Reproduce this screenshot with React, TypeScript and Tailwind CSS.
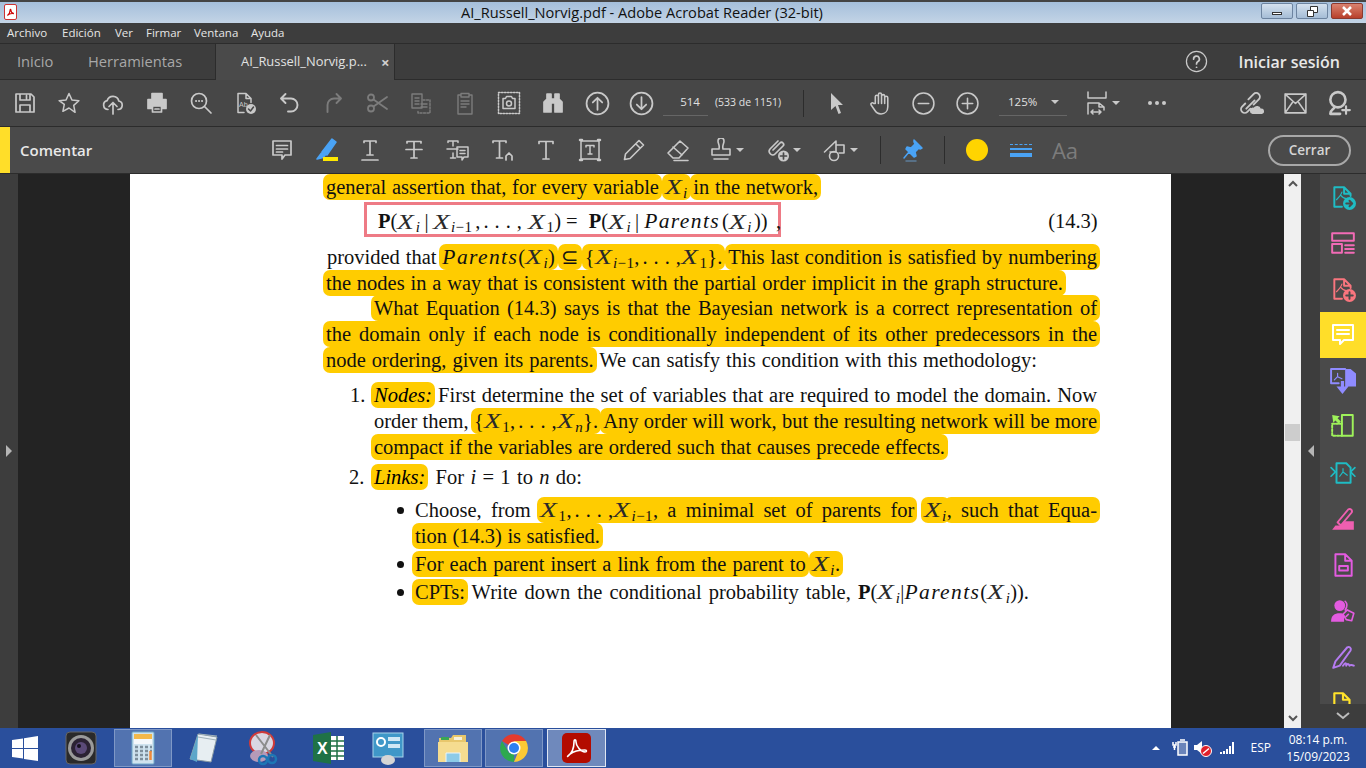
import type { ReactNode } from "react";

const ui = "font-['Open_Sans',sans-serif]";

function Ic({ children, c = "#c9c9c9", s = 24, sw = 1.7 }: { children: ReactNode; c?: string; s?: number; sw?: number }) {
  return (
    <svg width={s} height={s} viewBox="0 0 24 24" fill="none" stroke={c} strokeWidth={sw} strokeLinecap="round" strokeLinejoin="round" className="shrink-0">
      {children}
    </svg>
  );
}

function Cell({ children, w = "w-[44px]" }: { children: ReactNode; w?: string }) {
  return <div className={`${w} h-full flex items-center justify-center shrink-0`}>{children}</div>;
}

function Caret() {
  return <div className="w-0 h-0 border-x-[4px] border-x-transparent border-t-[4px] border-t-[#c9c9c9] ml-[3px]" />;
}

const gray = "#7c7c7c";

const topIcons: ReactNode[] = [
  <Ic><path d="M3 3h15l3 3v15H3zM7 3v6h10V3M13.5 4.500v3M7 21v-7h10v7" /></Ic>,
  <Ic sw={1.5}><path d="M12 2.500l2.900 6.400 7 .8-5.200 4.700 1.400 6.900L12 17l-6.100 3.300 1.400-6.900L2.100 9.700l7-.8z" /></Ic>,
  <Ic><path d="M7 18.500a4.500 4.500 0 0 1-.8-8.900 6 6 0 0 1 11.600.4 4.300 4.300 0 0 1-.8 8.500M12 23V11.500M8 15.500l4-4 4 4" /></Ic>,
  <Ic c="#c9c9c9"><path fill="#c9c9c9" d="M7 2.500h10v5H7zM3 8.500h18v9h-3.500v-3h-11v3H3z" /><path d="M7.500 15h9v6h-9zM10 18h4" /></Ic>,
  <Ic><circle cx="10" cy="10" r="7.500" /><path d="M15.500 15.500L22 22" /><path d="M7 10h.1M10 10h.1M13 10h.1" strokeWidth="2" /></Ic>,
  <Ic sw={1.5}><path d="M5 2.500h8l5 5v4M13 2.500v5h5M11 21.500H5v-19" /><text x="6" y="16" fontSize="7" fill="#c9c9c9" stroke="none" fontFamily="Liberation Sans">Ab</text><circle cx="18" cy="18" r="5" fill="#c9c9c9" stroke="none" /><path d="M15.500 18l2 2 3-4" stroke="#474747" /></Ic>,
  <Ic sw={1.9}><path d="M8.500 3L4 7.500 8.500 12M4 7.500h10a6.500 6.500 0 0 1 0 13h-3" /></Ic>,
  <Ic c={gray} sw={1.9}><path d="M15.500 3L20 7.500 15.500 12M20 7.500h-7a6.500 6.500 0 0 0-6.500 6.500v7" /></Ic>,
  <Ic c={gray} sw={1.8}><circle cx="6" cy="6.500" r="3" /><circle cx="6" cy="17.500" r="3" /><path d="M8.500 8.500L22 18M8.500 15.500L22 6" /></Ic>,
  <Ic c={gray} sw={1.4}><path d="M3 3h10v14H3zM6 7h4M6 10h4M6 13h4" /><path d="M14 9h7v13H9v-3" strokeDasharray="2 1.500" /><path d="M12 13h6M12 16h6" /></Ic>,
  <Ic c={gray} sw={1.4}><path d="M8 4H5v19h14V4h-3M8 2.500h8V6H8zM8 10h8M8 13h8M8 16h5" /></Ic>,
  <Ic sw={1.5}><path d="M1.500 1.500h21v21h-21z" strokeDasharray="1.500 1.500" /><path d="M6 7.500h2.500l1-2h5l1 2H18v10H6z" /><circle cx="12" cy="12.500" r="2.500" /></Ic>,
  <Ic c="#c9c9c9"><path fill="#c9c9c9" d="M6 3h4v5h4V3h4v5l3 3v10h-7v-9h-4v9H3V11l3-3z" /></Ic>,
  <Ic s={25}><circle cx="12" cy="12" r="10.500" /><path d="M12 18V6.500M7.500 11L12 6.500l4.500 4.500" /></Ic>,
  <Ic s={25}><circle cx="12" cy="12" r="10.500" /><path d="M12 6v11.500M7.500 13l4.500 4.500 4.500-4.500" /></Ic>,
];

const T = "M5 5.500V4h12v1.500M11 4v14M8 18h6";

const commentIcons: ReactNode[] = [
  <Ic><path d="M3 3h18v14h-6l-3 4v-4H3zM6.500 7.500h11M6.500 11h11M6.500 14h6" /></Ic>,
  <Ic s={24} c="#4aa3f5" sw={1.5}><path fill="#4aa3f5" d="M18 1l4 3-9 13-5-3zM7.500 15l3.500 2.500-2 2L3 21z" /><rect x="9" y="19" width="15" height="4" fill="#ffe800" stroke="none" /></Ic>,
  <Ic><path d={T} transform="translate(1 -1)" /><path d="M4 22h16" /></Ic>,
  <Ic><path d="M5 5V3.500h14V5M12 3.500V20M9 20h6M4 11.500h16" /></Ic>,
  <Ic sw={1.5}><path d="M2 4.500V3h10v1.500M7 3v5M7 15v5M4.500 20h5M1 11h11" /><path d="M11 9h11v10h-4l-2 3v-3h-5zM14 12.500h5M14 15.500h5" /></Ic>,
  <Ic><path d="M3 4.500V3h13v1.500M9.500 3v17M6.500 20h6M16 22v-4l3-3 3 3v4" /></Ic>,
  <Ic><path d="M5 5.500V3.500h14v2M12 3.500V21M9 21h6" /></Ic>,
  <Ic sw={1.5}><path d="M3 3h18v18H3zM8 9V7.500h8V9M12 7.500V16M10 16h4" /><path d="M2 2h2M20 2h2M2 22h2M20 22h2" strokeWidth="2.500" /></Ic>,
  <Ic sw={1.6}><path d="M17 2.500l4.500 4.500L8 20.500 2.500 21.500 3.500 16zM14 6l4 4" /></Ic>,
  <Ic sw={1.6}><path d="M14 3l8 7-9 10H7l-5-5zM7 9l9 8M8 22.500h14" /></Ic>,
];

function Doc({ c, children }: { c: string; children?: ReactNode }) {
  return (
    <>
      <path d="M11 21H4V3h9l6 6v2M13 3v6h6" stroke={c} />
      <path d="M11 7.500c-1 3-3 5-5 7M10 10.500c1.500 2 3 3 5 3" stroke={c} strokeWidth="1.100" />
      {children}
    </>
  );
}

const rightIcons: ReactNode[] = [
  <Ic c="#1fbcc4" s={26} sw={1.8}><Doc c="#1fbcc4"><circle cx="18" cy="18" r="6" fill="#1fbcc4" stroke="none" /><path d="M15 18h5M18 15.500l2.500 2.500-2.500 2.500" stroke="#4a4a4a" /></Doc></Ic>,
  <Ic c="#f26bb6" s={26} sw={1.8}><path d="M2 3h20v7H2zM2 13h9v8H2zM14 14h8M14 17.500h8M14 21h8" /></Ic>,
  <Ic c="#f9757e" s={26} sw={1.8}><Doc c="#f9757e"><circle cx="18" cy="18" r="6" fill="#f9757e" stroke="none" /><path d="M15 18h6M18 15v6" stroke="#4a4a4a" /></Doc></Ic>,
  <Ic c="#ffffff" s={24} sw={2}><path d="M2 2h20v15h-9l-4 4v-4H2zM6 7h12M6 11h12" /></Ic>,
  <Ic c="#8f8bff" s={26} sw={1.8}><path d="M8 14H1V1h13" /><path d="M7 5v3L4 11M7 8l4 2" strokeWidth="1.100" /><path fill="#8f8bff" stroke="none" d="M14 1h5l5 4v12H14zM10 12h3v5h4l-5.500 7L6 17h4z" /></Ic>,
  <Ic c="#9ef25a" s={26} sw={1.8}><path d="M11 1h10v19H11z" /><path d="M11 9H2v11h9" strokeDasharray="2 1.500" /><path fill="#9ef25a" stroke="none" d="M2 1l7 1-2 2 3 3-2 2-3-3-2 2z" /></Ic>,
  <Ic c="#1fbcc4" s={26} sw={1.8}><path d="M6 3h9l4 4v14H6zM6 3v4M19 7v3" /><path d="M12 8v3L9 15M12 11l4 3" strokeWidth="1.100" /><path d="M1 7l4 4-4 4M23 7l-4 4 4 4" strokeWidth="1.500" /></Ic>,
  <Ic c="#ef5fb0" s={26} sw={1.8}><path d="M7 15L17 3c2-1 4 1 3 3L10 18z" /><path fill="#ef5fb0" stroke="none" d="M2 22l3-4h5l4-4h8v8z" /></Ic>,
  <Ic c="#e35be0" s={26} sw={1.8}><path d="M5 2h9l6 6v14H5zM14 2v6h6M8.500 13h8v4h-8z" /></Ic>,
  <Ic c="#e35be0" s={26} sw={1.5}><circle cx="9" cy="7" r="5" fill="#e35be0" stroke="none" /><path fill="#e35be0" stroke="none" d="M1 22c0-6 3-8 8-8 2 0 3 .500 4 1v7z" /><path d="M14 3c2 2 2 5 0 8M16 11l6 3-2 7-5-1-3-5zM15 17l2-2" /></Ic>,
  <Ic c="#b57bf0" s={26} sw={1.8}><path d="M5 16L16 3c2-1 4 1 3 3L9 20l-6 2zM12 20c2-3 3-3 3 0 1-2 2-2 3 0 1-1 2-1 4 0" /></Ic>,
  <Ic c="#ffe22b" s={26} sw={2}><path d="M4 23V3h8l6 6v4M12 3v6h6M4 23h16v-4" /></Ic>,
];

function X({ sub }: { sub?: ReactNode }) {
  return (
    <span className="whitespace-nowrap">
      <i className="inline-block origin-left scale-x-[1.25] mr-[5px] text-[22px] text-[#2a2a2a]">X</i>
      {sub !== undefined && <sub className="text-[15px] not-italic tracking-[0.4px]">{sub}</sub>}
    </span>
  );
}

const I = () => <i>i</i>;
const Im1 = () => (
  <>
    <i>i</i>−1
  </>
);

const Dots = () => <span className="tracking-[6px] ml-[3px]">...</span>;
const Parents = () => <i className="text-[21.500px] tracking-[1.400px]">Parents</i>;

function H({ children, className = "" }: { children: ReactNode; className?: string }) {
  return <span className={`bg-[#ffcc00] rounded-[7px] py-[2px] px-[3px] -mx-[3px] ${className}`}>{children}</span>;
}

function Line({ w, ml = "ml-[196px]", mt = "", children }: { w: string; ml?: string; mt?: string; children: ReactNode }) {
  return (
    <div className={`h-[26px] leading-[26px] shrink-0 text-justify [text-align-last:justify] whitespace-nowrap ${w} ${ml} ${mt}`}>
      {children}
    </div>
  );
}

function Bullet() {
  return <span className="w-[7px] h-[7px] rounded-full bg-[#111] shrink-0 mt-[10px]" />;
}

function Page() {
  return (
    <div className="w-[1041px] h-full shrink-0 bg-white flex flex-col font-['Liberation_Serif',serif] text-[20.500px] text-[#111] overflow-hidden">
      <Line w="w-[492px]">
        <H>general assertion that, for every variable</H> <H><X sub={<I />} /></H> <H>in the network,</H>
      </Line>
      <div className="flex items-center h-[35px] mt-[2px] ml-[234px] shrink-0">
        <div className="w-[417px] h-[35px] border-[3px] border-[#ee7a85] flex items-center pl-[11px] pt-[3px] whitespace-nowrap">
          <b>P</b>(<X sub={<I />} /><span className="pl-[4px] pr-[4px]">|</span><X sub={<Im1 />} /><span className="ml-[3px]">,</span><Dots />,<span className="w-[6px]" /><X sub="1" />)<span className="pl-[5px] pr-[11px]">=</span><b>P</b>(<X sub={<I />} /><span className="pl-[4px] pr-[5px]">|</span><Parents /><span className="ml-[2px]">(</span><X sub={<I />} /><span className="ml-[2px]">))</span>
        </div>
        <span className="ml-[-5px] pt-[3px]">,</span>
        <span className="ml-[267px] pt-[3px]">(14.3)</span>
      </div>
      <Line w="w-[770px]" ml="ml-[197px]" mt="mt-[7px]">
        provided that <H><Parents />(<X sub={<I />} />)</H> <H>⊆</H> <H>{"{"}<X sub={<Im1 />} />,<Dots />,<X sub="1" />{"}"}.</H> <H>This last condition is satisfied by numbering</H>
      </Line>
      <Line w="w-[737px]">
        <H>the nodes in a way that is consistent with the partial order implicit in the graph structure.</H>
      </Line>
      <Line w="w-[723px]" ml="ml-[244px]" mt="-mt-px">
        <H>What Equation (14.3) says is that the Bayesian network is a correct representation of</H>
      </Line>
      <Line w="w-[771px]">
        <H>the domain only if each node is conditionally independent of its other predecessors in the</H>
      </Line>
      <Line w="w-[711px]">
        <H>node ordering, given its parents.</H> We can satisfy this condition with this methodology:
      </Line>
      <div className="flex mt-[9px] shrink-0">
        <span className="ml-[220px] w-[24px] leading-[26px]">1.</span>
        <Line w="w-[723px]" ml="ml-0">
          <H><i className="text-black">Nodes:</i></H> First determine the set of variables that are required to model the domain. Now
        </Line>
      </div>
      <Line w="w-[723px]" ml="ml-[244px]">
        order them, <H>{"{"}<X sub="1" />,<Dots />,<X sub={<i>n</i>} />{"}"}.</H> <H>Any order will work, but the resulting network will be more</H>
      </Line>
      <Line w="w-[571px]" ml="ml-[244px]">
        <H>compact if the variables are ordered such that causes precede effects.</H>
      </Line>
      <div className="flex mt-[4px] shrink-0">
        <span className="ml-[219px] w-[25px] leading-[26px]">2.</span>
        <Line w="w-[208px]" ml="ml-0">
          <H><i className="text-black">Links:</i></H>{" "}<span className="ml-[4px]">For <i>i</i> = 1 to <i>n</i> do:</span>
        </Line>
      </div>
      <div className="flex mt-[7px] shrink-0">
        <span className="ml-[267px] w-[18px] flex"><Bullet /></span>
        <Line w="w-[682px]" ml="ml-0">
          Choose, from <H><X sub="1" />,<Dots />,<X sub={<Im1 />} />, a minimal set of parents for</H> <H><X sub={<I />} /></H><H>, such that Equa-</H>
        </Line>
      </div>
      <Line w="w-[185px]" ml="ml-[285px]">
        <H>tion (14.3) is satisfied.</H>
      </Line>
      <div className="flex mt-[2px] shrink-0">
        <span className="ml-[267px] w-[18px] flex"><Bullet /></span>
        <Line w="w-[425px]" ml="ml-0">
          <H>For each parent insert a link from the parent to</H> <H><X sub={<I />} />.</H>
        </Line>
      </div>
      <div className="flex mt-[2px] shrink-0">
        <span className="ml-[267px] w-[18px] flex"><Bullet /></span>
        <Line w="w-[614px]" ml="ml-0">
          <H>CPTs:</H> Write down the conditional probability table, <b>P</b>(<X sub={<I />} />|<Parents />(<X sub={<I />} />)).
        </Line>
      </div>
    </div>
  );
}

function Tri({ dir }: { dir: "left" | "right" }) {
  return dir === "left" ? (
    <div className="w-0 h-0 border-y-[6px] border-y-transparent border-r-[6px] border-r-[#b5b5b5]" />
  ) : (
    <div className="w-0 h-0 border-y-[6px] border-y-transparent border-l-[6px] border-l-[#b5b5b5]" />
  );
}

function TaskItem({ children, on, w = "w-[58px]", ml = "" }: { children: ReactNode; on?: "open" | "active"; w?: string; ml?: string }) {
  const look =
    on === "active"
      ? "bg-[#6f89bc] border-[#dfe6f2]"
      : on === "open"
        ? "bg-[#5273b0] border-[#7f98c6]"
        : "border-transparent";
  return <div className={`${w} ${ml} h-[38px] border flex items-center justify-center shrink-0 ${look}`}>{children}</div>;
}

function Taskbar() {
  return (
    <div className={`h-[40px] bg-[#2a4f9c] flex items-center shrink-0 ${ui}`}>
      <div className="w-[50px] flex justify-center">
        <svg width="28" height="27" viewBox="0 0 28 27"><path fill="#fff" d="M1 5l11-1.500v9.500H1zM13 3.300L27 1v12H13zM1 14h11v9.500L1 22zM13 14h14v12l-14-2z" /></svg>
      </div>
      <Cell w="w-[62px]">
        <svg width="32" height="34" viewBox="0 0 32 34">
          <rect x="1" y="1" width="30" height="32" rx="4" fill="#2a2a2a" stroke="#666" />
          <circle cx="16" cy="17" r="13" fill="#9a9a9a" />
          <circle cx="16" cy="17" r="10" fill="#2b2233" />
          <circle cx="16" cy="17" r="6" fill="#5b4a78" />
          <circle cx="14" cy="15" r="2" fill="#15101c" />
        </svg>
      </Cell>
      <TaskItem on="open" ml="ml-[2px]">
        <svg width="24" height="34" viewBox="0 0 24 34">
          <rect x="1" y="1" width="22" height="32" rx="1" fill="#cfe3ef" stroke="#6ea8c8" />
          <rect x="3" y="3" width="18" height="5" fill="#f2b84b" />
          <rect x="3" y="8" width="18" height="5" fill="#f4f8fb" />
          <path d="M4 16h3M9 16h3M14 16h3M19 16h2M4 20h3M9 20h3M14 20h3M19 20h2M4 24h3M9 24h3M14 24h3M4 28h3M9 28h3M14 28h3" stroke="#7d8f9c" strokeWidth="2.500" />
          <path d="M19.500 20v9" stroke="#ef8a3a" strokeWidth="2.500" />
        </svg>
      </TaskItem>
      <Cell w="w-[62px]">
        <svg width="30" height="34" viewBox="0 0 30 34">
          <path d="M10 3l19 3-6 25L2 28z" fill="#e7eef2" stroke="#8a9aa3" />
          <path d="M10 3l-8 25 7 3z" fill="#5da6c9" />
          <path d="M10 6l18 3M11 3l18 2" stroke="#9fb0b9" />
        </svg>
      </Cell>
      <Cell w="w-[60px]">
        <svg width="32" height="36" viewBox="0 0 32 36">
          <ellipse cx="14" cy="13" rx="12" ry="11" fill="#d9d7e2" stroke="#cf3a3a" strokeWidth="2" />
          <ellipse cx="11" cy="26" rx="9" ry="6" fill="#b59ab8" />
          <path d="M8 5l17 22M22 5L13 24" stroke="#8c8c8c" strokeWidth="2" />
          <circle cx="24" cy="29" r="4" fill="none" stroke="#1d77b5" strokeWidth="2.500" />
          <circle cx="15" cy="30" r="4" fill="none" stroke="#1d77b5" strokeWidth="2.500" />
        </svg>
      </Cell>
      <Cell w="w-[68px]">
        <svg width="31" height="32" viewBox="0 0 31 32">
          <path fill="#1f7246" d="M0 3l18-3v32L0 29z" />
          <path d="M18 4h13v24H18z" fill="#fff" />
          <path d="M18 9h13M18 14h13M18 19h13M18 24h13M24 4v24" stroke="#1f7246" strokeWidth="1.500" />
          <text x="4" y="22" fontSize="16" fontWeight="700" fill="#fff" fontFamily="Liberation Sans">X</text>
        </svg>
      </Cell>
      <Cell w="w-[52px]">
        <svg width="32" height="34" viewBox="0 0 32 34">
          <rect x="1" y="2" width="30" height="24" fill="#3f97c8" stroke="#a8d4ea" />
          <circle cx="9" cy="11" r="4" fill="none" stroke="#fff" strokeWidth="2" />
          <rect x="16" y="6" width="12" height="4" fill="#cfe7f5" />
          <rect x="16" y="13" width="12" height="4" fill="#cfe7f5" />
          <ellipse cx="16" cy="29" rx="7" ry="5" fill="#d5d5d5" />
        </svg>
      </Cell>
      <TaskItem on="open" ml="ml-[10px]">
        <svg width="32" height="30" viewBox="0 0 32 30">
          <path d="M2 5h12l2-3h13v25H2z" fill="#e8c76c" />
          <path d="M4 4h8v3H4z" fill="#3aa655" />
          <path d="M17 4h8v3h-8z" fill="#f6f1dc" />
          <path d="M1 9h30v20H1z" fill="#f5dc90" />
          <path d="M9 29v-9h14v9" fill="#8ccbe8" stroke="#e9f5fa" />
        </svg>
      </TaskItem>
      <TaskItem on="open" ml="ml-[3px]">
        <svg width="32" height="32" viewBox="0 0 32 32">
          <path d="M16 16L4 9a14 14 0 0 1 24.100 0z" fill="#e33b2e" />
          <path d="M16 30A14 14 0 0 1 4 9l7 12 5 1z" fill="#2da94f" />
          <path d="M16 30a14 14 0 0 0 12.100-21H16l5 9z" fill="#fcc934" />
          <circle cx="16" cy="16" r="6.500" fill="#fff" />
          <circle cx="16" cy="16" r="5" fill="#2d7ff0" />
        </svg>
      </TaskItem>
      <TaskItem on="active" ml="ml-[4px]" w="w-[59px]">
        <svg width="29" height="32" viewBox="0 0 29 32">
          <rect x="0" y="1" width="29" height="30" rx="5" fill="#b30b00" />
          <path d="M6 24c4-3 6-9 6-14 0-3 2-3 2 0 0 4 5 10 9 10 2 0 2-2 0-2-5 0-11 1-15 4-2 2-3 3-2 2z" fill="none" stroke="#fff" strokeWidth="1.600" />
        </svg>
      </TaskItem>
      <div className="ml-auto flex items-center text-white shrink-0">
        <div className="w-0 h-0 border-x-[4px] border-x-transparent border-b-[4px] border-b-white mr-[12px]" />
        <svg width="16" height="18" viewBox="0 0 16 18" fill="none" stroke="#fff" strokeWidth="1.500" className="mr-[5px]">
          <rect x="6" y="3" width="9" height="13" fill="#fff" fillOpacity="0.300" />
          <path d="M8 1h5M1 3v3h3V3M2.500 6v5M1 8h3" />
        </svg>
        <svg width="20" height="20" viewBox="0 0 20 20" className="mr-[7px]">
          <path d="M1 7h3l5-4v13l-5-4H1z" fill="#fff" />
          <circle cx="13" cy="13" r="5.500" fill="#e0202a" stroke="#fff" />
          <path d="M10 15.500l6-5" stroke="#fff" strokeWidth="1.500" />
        </svg>
        <div className="flex items-end gap-px h-[12px] mr-[17px]">
          <i className="w-[2px] h-[2px] bg-white" /><i className="w-[2px] h-[3px] bg-white" /><i className="w-[2px] h-[5px] bg-white" /><i className="w-[2px] h-[8px] bg-white" /><i className="w-[2px] h-[12px] bg-white" />
        </div>
        <span className="text-[12px] mr-[9px]">ESP</span>
        <div className="w-[76px] text-center text-[12px] leading-[17px] mr-[10px]">
          <div>08:14 p.m.</div>
          <div>15/09/2023</div>
        </div>
      </div>
    </div>
  );
}

export default function App() {
  return (
    <div className={`w-[1366px] h-[768px] overflow-hidden flex flex-col bg-[#3d3d3d] ${ui}`}>
      {/* title bar */}
      <div className="h-[23px] shrink-0 relative border-t-2 border-[#444] bg-gradient-to-b from-[#a5bfdb] to-[#c3d4e6] flex items-center justify-center text-[14.600px] text-[#111] pr-[82px]">
        <div className="absolute left-[4px] top-[2px] w-[13px] h-[16px] rounded-[2px] bg-white border border-[#c33] flex items-center justify-center">
          <svg width="9" height="9" viewBox="0 0 24 24" fill="none" stroke="#c00" strokeWidth="3"><path d="M4 20c4-4 7-10 7-15 0-2 2-2 2 0 0 5 4 9 8 10-6-1-13 0-17 5z" /></svg>
        </div>
        AI_Russell_Norvig.pdf - Adobe Acrobat Reader (32-bit)
        <div className="absolute right-[3px] top-px flex gap-[3px]">
          <div className="w-[32px] h-[16px] rounded-[2px] border border-[#6d84a0] bg-gradient-to-b from-[#d5e1ee] to-[#a5bdd6] flex items-center justify-center"><i className="w-[10px] h-[3px] border border-[#333] bg-white mt-[4px]" /></div>
          <div className="w-[32px] h-[16px] rounded-[2px] border border-[#6d84a0] bg-gradient-to-b from-[#d5e1ee] to-[#a5bdd6] flex items-center justify-center">
            <svg width="11" height="11" viewBox="0 0 11 11" fill="#fff" stroke="#333"><path d="M3.500.5h7v6h-7z" /><path d="M.5 4.500h6v6h-6z" /></svg>
          </div>
          <div className="w-[32px] h-[16px] rounded-[2px] border border-[#8a3a30] bg-gradient-to-b from-[#d9826f] to-[#b83f2b] flex items-center justify-center">
            <svg width="12" height="10" viewBox="0 0 12 10" stroke="#fff" strokeWidth="2.500"><path d="M2 1l8 8M10 1L2 9" /></svg>
          </div>
        </div>
      </div>
      {/* menu */}
      <div className="h-[21px] shrink-0 bg-[#3d3d3d] border-b border-[#2c2c2c] flex items-center text-[11.500px] text-[#e6e6e6] pl-[7px]">
        <span className="w-[55px]">Archivo</span>
        <span className="w-[53px]">Edición</span>
        <span className="w-[31px]">Ver</span>
        <span className="w-[48px]">Firmar</span>
        <span className="w-[57px]">Ventana</span>
        <span>Ayuda</span>
      </div>
      {/* tabs */}
      <div className="h-[36px] shrink-0 bg-[#3d3d3d] border-b border-[#2c2c2c] flex items-center text-[14.700px]">
        <span className="ml-[17px] w-[71px] text-[#a8a8a8]">Inicio</span>
        <span className="w-[127px] text-[#a8a8a8]">Herramientas</span>
        <div className="w-[180px] h-[36px] mb-[-1px] bg-[#4a4a4a] border-x border-[#2c2c2c] flex items-center pl-[25px] text-[12.900px] text-[#e2e2e2]">
          <span className="w-[140px] whitespace-nowrap">AI_Russell_Norvig.p...</span>
          <span className="text-[15px] font-bold text-[#d0d0d0]">×</span>
        </div>
        <div className="ml-auto mr-[26px] flex items-center">
          <Ic s={23} sw={1.300}><circle cx="12" cy="12" r="10.500" /><path d="M9 9.500a3 3 0 1 1 4.500 2.500c-1 .600-1.500 1-1.500 2.500M12 18h.1" strokeWidth="1.800" /></Ic>
          <span className="ml-[31px] text-[#e8e8e8] font-semibold text-[16px]">Iniciar sesión</span>
        </div>
      </div>
      {/* toolbar */}
      <div className="h-[47px] shrink-0 bg-[#474747] border-b border-[#2c2c2c] flex items-center pl-[3px]">
        {topIcons.map((ic, i) => (
          <Cell key={i}>{ic}</Cell>
        ))}
        <div className="w-[45px] h-[28px] mt-[-2px] border-b border-[#666] flex items-center justify-center pl-[9px] text-[11.500px] text-[#e0e0e0]">514</div>
        <span className="ml-[7px] w-[68px] text-[10.500px] text-[#e0e0e0] whitespace-nowrap">(533 de 1151)</span>
        <div className="ml-[20px] w-px h-[27px] bg-[#2c2c2c]" />
        <div className="ml-[11px] flex h-full">
          <Cell>
            <svg width="16" height="24" viewBox="0 0 16 24"><path fill="#c9c9c9" d="M2 2l12 12H9l3 8-2.500 1-3-8L2 19z" /></svg>
          </Cell>
          <Cell w="w-[42px]">
            <Ic s={25} sw={1.500}><path d="M7 12V5.500a1.500 1.500 0 0 1 3 0V3.500a1.500 1.500 0 0 1 3 0v1.500a1.500 1.500 0 0 1 3 0v1.500a1.500 1.500 0 0 1 3 0V15c0 4-2.500 7-6.500 7-3 0-4.500-1-6-3.500L3 13.500c-1-1.500 1-3 2.500-1.500zM10 5v7M13 4v8M16 5v7" /></Ic>
          </Cell>
          <Cell><Ic s={25} sw={1.500}><circle cx="12" cy="12" r="10" /><path d="M7 12h10" /></Ic></Cell>
          <Cell><Ic s={25} sw={1.500}><circle cx="12" cy="12" r="10" /><path d="M7 12h10M12 7v10" /></Ic></Cell>
        </div>
        <div className="ml-[10px] w-[68px] h-[28px] mt-[-2px] border-b border-[#666] flex items-center justify-between pl-[9px] pr-[8px] text-[11.500px] text-[#e0e0e0]">
          125%
          <Caret />
        </div>
        <div className="ml-[9px] w-[44px] flex items-center pl-[9px]">
          <Ic sw={1.600}><path d="M3 1v6h18V1M3 23v-11h11l5 4v3M14 12v4h5M6 21h10M6 21l2-2M6 21l2 2M16 21l-2-2M16 21l-2 2" strokeWidth="1.500" /></Ic>
          <Caret />
        </div>
        <div className="ml-[28px] flex gap-[3px]">
          <i className="w-[4px] h-[4px] rounded-full bg-[#c9c9c9]" /><i className="w-[4px] h-[4px] rounded-full bg-[#c9c9c9]" /><i className="w-[4px] h-[4px] rounded-full bg-[#c9c9c9]" />
        </div>
        <div className="ml-auto mr-[5px] flex h-full">
          <Cell><Ic s={25} sw={1.800}><path d="M9 8l5-5a3.500 3.500 0 0 1 5 5l-5 5M6 12l-3 3a3.500 3.500 0 0 0 5 5l3-3M7 17l8-8" /><path fill="#c9c9c9" stroke="none" d="M13 22a3 3 0 0 1 1-6 4 4 0 0 1 7 1 2.500 2.500 0 0 1 1 5z" /></Ic></Cell>
          <Cell><Ic s={25} sw={1.500}><path d="M2 3h20v18H2zM2 3l10 9 10-9M2 21l7-10M22 21l-7-10" /></Ic></Cell>
          <Cell><Ic s={26} sw={2.400}><circle cx="11" cy="9" r="7" /><path d="M8 15.500c-1 3-4 2.500-4 6.500h9" /><path d="M18.500 15v7M15 18.500h7" strokeWidth="2" /></Ic></Cell>
        </div>
      </div>
      {/* comment bar */}
      <div className="h-[46px] shrink-0 bg-[#4a4a4a] flex items-center">
        <div className="w-[10px] h-full bg-[#ffde29]" />
        <span className="ml-[10px] w-[240px] text-[15px] font-semibold text-[#e8e8e8]">Comentar</span>
        {commentIcons.map((ic, i) => (
          <Cell key={i}>{ic}</Cell>
        ))}
        <div className="w-[57px] pl-[9px] flex items-center">
          <Ic sw={1.600}><path d="M9 3a3 3 0 0 1 6 0c0 3-2 4-1 8h7v6H3v-6h7c1-4-1-5-1-8zM5 21h14" /></Ic>
          <Caret />
        </div>
        <div className="w-[57px] pl-[9px] flex items-center">
          <Ic sw={1.700}><path d="M12 3L4 11c-3 3 2 8 5 5l8-8c2-2-1-5-3-3l-7 7" /><circle cx="17.500" cy="18" r="5.500" fill="#c9c9c9" stroke="none" /><path d="M14.500 18h6M17.500 15v6" stroke="#4a4a4a" /></Ic>
          <Caret />
        </div>
        <div className="w-[57px] pl-[9px] flex items-center">
          <Ic sw={1.600}><path d="M1.500 14L13 3v11H7M13 7h8v8h-5" /><circle cx="11" cy="18" r="4.500" /></Ic>
          <Caret />
        </div>
        <div className="ml-[9px] w-px h-[28px] bg-[#2c2c2c]" />
        <div className="ml-[9px] w-[44px] flex justify-center">
          <Ic c="#4aa3f5" sw={1.500}><path fill="#4aa3f5" d="M14 2l8 8-2 1-1-1-4 4 1 4-2 1-8-8 1-2 4 1 4-4-1-2zM9 14l-5 6" /><path d="M6 23h10" stroke="#5d7d9a" /></Ic>
        </div>
        <div className="ml-[10px] w-px h-[28px] bg-[#2c2c2c]" />
        <div className="ml-[10px] flex h-full">
          <Cell><div className="w-[22px] h-[22px] rounded-full bg-[#ffd400]" /></Cell>
          <Cell>
            <div className="w-[22px] flex flex-col gap-[3px]">
              <i className="h-px border-t border-dashed border-[#4aa3f5]" />
              <i className="h-[2px] bg-[#4aa3f5]" />
              <i className="h-[4px] bg-[#4aa3f5]" />
            </div>
          </Cell>
          <Cell><span className="text-[22px] text-[#7c7c7c]">Aa</span></Cell>
        </div>
        <div className="ml-auto mr-[15px] w-[83px] h-[31px] rounded-full border-2 border-[#a8a8a8] flex items-center justify-center text-[13.500px] font-semibold text-[#d5d5d5]">Cerrar</div>
      </div>
      {/* document */}
      <div className="h-[555px] shrink-0 flex border-t border-[#2c2c2c]">
        <div className="w-[18px] bg-[#3d3d3d] flex items-center justify-center"><Tri dir="right" /></div>
        <div className="w-[112px] bg-[#232323]" />
        <Page />
        <div className="w-[113px] bg-[#232323]" />
        <div className="w-[17px] bg-[#f0f0f0] relative flex flex-col items-center justify-between py-[6px]">
          <svg width="10" height="7" viewBox="0 0 10 7" fill="none" stroke="#555" strokeWidth="2"><path d="M1 6l4-4 4 4" /></svg>
          <div className="absolute top-[250px] left-px right-px h-[17px] bg-[#cdcdcd]" />
          <svg width="10" height="7" viewBox="0 0 10 7" fill="none" stroke="#555" strokeWidth="2"><path d="M1 1l4 4 4-4" /></svg>
        </div>
        <div className="w-[19px] bg-[#3d3d3d] flex items-center justify-center"><Tri dir="left" /></div>
        <div className="w-[46px] bg-[#4a4a4a] flex flex-col">
          <div className="flex-1 overflow-hidden">
            {rightIcons.map((ic, i) => (
              <div key={i} className={`h-[46px] flex items-center justify-center ${i === 3 ? "bg-[#ffde29]" : ""}`}>{ic}</div>
            ))}
          </div>
          <div className="h-[24px] shrink-0 bg-[#3d3d3d] flex items-center justify-center">
            <svg width="14" height="8" viewBox="0 0 14 8" fill="none" stroke="#bdbdbd" strokeWidth="2"><path d="M1 1l6 5 6-5" /></svg>
          </div>
        </div>
      </div>
      <Taskbar />
    </div>
  );
}
